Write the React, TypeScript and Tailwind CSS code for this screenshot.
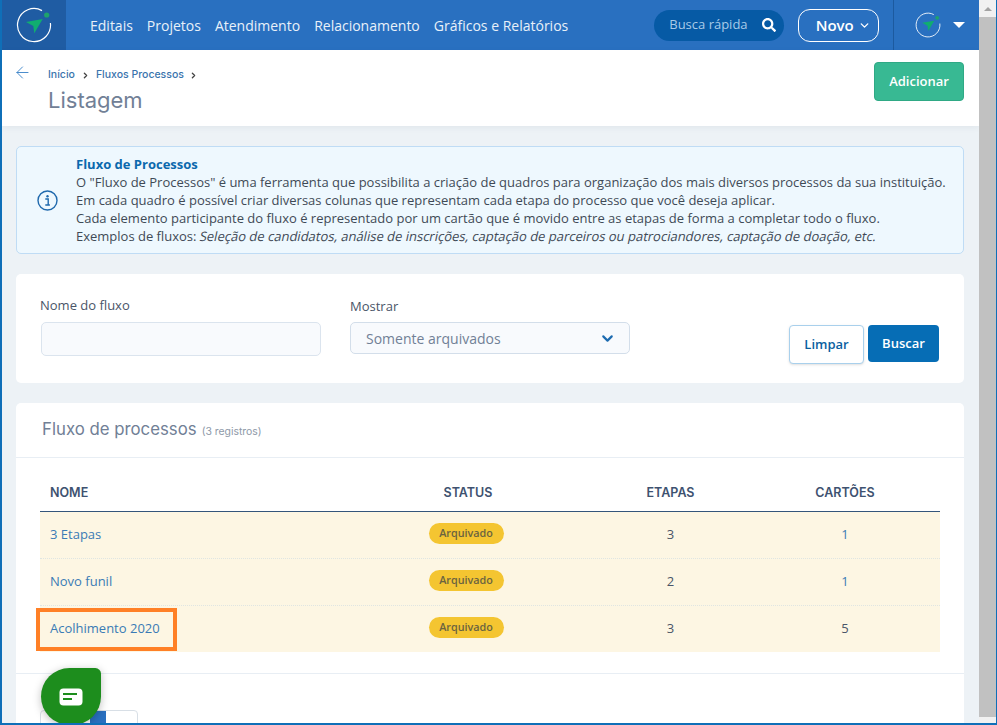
import { ArrowLeft, ChevronDown, ChevronRight } from "lucide-react";
import { FaSearch } from "react-icons/fa";

const sans = "font-['Open_Sans',sans-serif]";
const head = "font-['Inter',sans-serif]";

function Logo({ size }: { size: number }) {
  return (
    <svg width={size} height={size} viewBox="0 0 36 36" fill="none">
      <path d="M26 3.6A16.5 16.5 0 1 0 34.4 16" stroke="#fff" strokeWidth="1.2" />
      <circle cx="30.7" cy="8" r="2.6" fill="#1fa36c" />
      <path d="M10 15L26.7 12L18.3 26.3L17.3 19Z" fill="#10ad70" />
    </svg>
  );
}

const rows = [
  { name: "3 Etapas", etapas: 3, cartoes: 1 },
  { name: "Novo funil", etapas: 2, cartoes: 1 },
  { name: "Acolhimento 2020", etapas: 3, cartoes: 5 },
];

export default function App() {
  return (
    <div className={`${sans} relative flex h-[725px] w-[997px] overflow-hidden border-b-2 border-l-2 border-r border-[#0f6fb8] bg-[#edf2f6] text-[13px] text-[#4a5568]`}>
      <div className="flex min-w-0 flex-1 flex-col">
        <header className="flex h-[50px] shrink-0 items-center bg-[#2970c0] text-white">
          <div className="flex h-full w-[64px] items-center justify-center bg-[#1f5ca3]">
            <Logo size={36} />
          </div>
          <nav className="ml-6 flex gap-[14px] text-[14px] text-[#e8f0f9]">
            <span>Editais</span>
            <span>Projetos</span>
            <span>Atendimento</span>
            <span>Relacionamento</span>
            <span>Gráficos e Relatórios</span>
          </nav>
          <div className="ml-[86px] flex h-[31px] w-[130px] items-center justify-between rounded-full bg-[#065aa5] pl-[15px] pr-[8px] text-[13px] text-[#a9cbe8]">
            Busca rápida
            <FaSearch size={14} className="text-white" />
          </div>
          <div className="ml-[14px] flex h-[33px] w-[81px] items-center justify-center gap-[4px] rounded-[12px] border border-white pl-[9px] text-[15px] font-semibold">
            Novo
            <ChevronDown size={13} strokeWidth={2.5} />
          </div>
          <div className="ml-[14px] flex h-full flex-1 items-center border-l border-[#1c5a9f] pl-[21px]">
            <Logo size={26} />
            <span className="ml-[12px] h-0 w-0 border-x-[6px] border-t-[6px] border-x-transparent border-t-white" />
          </div>
        </header>

        <div className="flex h-[76px] shrink-0 justify-between bg-white pr-[15px] shadow-[0_2px_6px_rgba(30,60,90,0.06)]">
          <div className="flex">
            <ArrowLeft size={19} strokeWidth={1.1} className="ml-[11px] mt-[13px] text-[#2f7cc4]" />
            <div className="ml-[16px] pt-[18px]">
              <div className={`${head} flex items-center gap-[6px] text-[10.5px] font-medium leading-[14px] text-[#3a74ad]`}>
                Início
                <ChevronRight size={9} strokeWidth={3.5} className="text-[#444]" />
                Fluxos Processos
                <ChevronRight size={9} strokeWidth={3.5} className="-ml-px text-[#444]" />
              </div>
              <h1 className={`${head} mt-[5px] text-[22px] leading-[26px] text-[#718096]`}>Listagem</h1>
            </div>
          </div>
          <button className="mt-3 h-[39px] w-[90px] rounded-[4px] border border-[#2fa985] bg-[#38b993] text-[13px] font-semibold text-white">
            Adicionar
          </button>
        </div>

        <main className="flex flex-1 flex-col gap-[20px] pl-[14px] pr-[15px] pt-[20px]">
          <section className="flex h-[108px] shrink-0 items-center rounded-[5px] border border-[#bfdcf5] bg-[#eef8fe] pl-[20px] text-[13px] leading-[18px] text-[#3f4a56]">
            <svg width="21" height="21" viewBox="0 0 21 21" fill="none" className="shrink-0 text-[#1f69ad]">
              <circle cx="10.5" cy="10.5" r="9.5" stroke="currentColor" strokeWidth="1.4" />
              <circle cx="10.5" cy="6.2" r="1.2" fill="currentColor" />
              <path d="M8.3 9h2.9v5.6M8.3 15h4.6" stroke="currentColor" strokeWidth="1.4" />
            </svg>
            <div className="ml-[18px] whitespace-nowrap">
              <div className="font-bold text-[#0b69ad]">Fluxo de Processos</div>
              <div>O "Fluxo de Processos" é uma ferramenta que possibilita a criação de quadros para organização dos mais diversos processos da sua instituição.</div>
              <div>Em cada quadro é possível criar diversas colunas que representam cada etapa do processo que você deseja aplicar.</div>
              <div>Cada elemento participante do fluxo é representado por um cartão que é movido entre as etapas de forma a completar todo o fluxo.</div>
              <div>
                Exemplos de fluxos: <span className="inline-block -skew-x-12">Seleção de candidatos, análise de inscrições, captação de parceiros ou patrociandores, captação de doação, etc.</span>
              </div>
            </div>
          </section>

          <section className="flex h-[109px] shrink-0 items-start rounded-[5px] bg-white pl-[25px] pt-[24px]">
            <div className="w-[280px]">
              <label className="-ml-px -mt-px block text-[13px] leading-[16px] text-[#4a5568]">Nome do fluxo</label>
              <div className="mt-[9px] h-[34px] rounded-[5px] border border-[#dbe4ee] bg-[#f8fafd]" />
            </div>
            <div className="ml-[29px] w-[280px]">
              <label className="block text-[13px] leading-[16px] text-[#4a5568]">Mostrar</label>
              <div className="mt-[8px] flex h-[32px] items-center justify-between rounded-[5px] border border-[#d3deea] bg-[#f8fafd] pl-[15px] pr-[13px] text-[14px] text-[#718096]">
                Somente arquivados
                <ChevronDown size={17} strokeWidth={3} className="text-[#1d6bb0]" />
              </div>
            </div>
            <button className="ml-[159px] mt-[27px] h-[39px] w-[75px] rounded-[4px] border border-[#a9d0ec] bg-white text-[13px] font-semibold text-[#0b5f9f] shadow-sm">
              Limpar
            </button>
            <button className="ml-[4px] mt-[27px] h-[37px] w-[71px] rounded-[4px] bg-[#066db5] text-[13px] font-semibold text-white">
              Buscar
            </button>
          </section>

          <section className="flex-1 rounded-t-[5px] bg-white">
            <div className="flex h-[55px] items-center gap-[5px] border-b border-[#e8eef4] pl-[26px]">
              <h2 className={`${head} text-[16.8px] text-[#718096]`}>Fluxo de processos</h2>
              <span className={`${head} mt-[3px] text-[10.4px] text-[#8e99a8]`}>(3 registros)</span>
            </div>
            <div className="mx-[24px] mt-[18px]">
              <div className={`${head} grid h-[36px] grid-cols-[305px_246px_159px_1fr] items-start border-b border-[#34557a] text-[12.5px] font-semibold leading-[14px] text-[#3e5270]`}>
                <span className="pl-[10px] pt-[10px]">NOME</span>
                <span className="pt-[10px] text-center">STATUS</span>
                <span className="pt-[10px] text-center">ETAPAS</span>
                <span className="pt-[10px] text-center">CARTÕES</span>
              </div>
              {rows.map((r, i) => (
                <div key={r.name} className={`grid grid-cols-[305px_246px_159px_1fr] items-center bg-[#fdf6e3] ${i < 2 ? "h-[47px] border-b border-dotted border-[#dfe5e2]" : "h-[46px]"}`}>
                  <span className="pl-[10px] text-[#3a7bb5]">{r.name}</span>
                  <span className="flex justify-center">
                    <span className="-ml-[4px] -mt-[4px] flex h-[21px] w-[75px] items-center justify-center rounded-full bg-[#f4c531] text-[10.8px] font-semibold text-[#6b6340]">Arquivado</span>
                  </span>
                  <span className="text-center text-[#4a5568]">{r.etapas}</span>
                  <span className={`text-center ${r.cartoes === 1 ? "text-[#3a7bb5]" : "text-[#4a5568]"}`}>{r.cartoes}</span>
                </div>
              ))}
            </div>
            <div className="mt-[21px] border-t border-[#e8eef4]">
              <div className="ml-[24px] mt-[36px] flex h-[30px] w-[98px] overflow-hidden rounded-[4px] border border-[#d8dfe6]">
                <div className="w-[49px]" />
                <div className="w-[16px] bg-[#2970c0]" />
              </div>
            </div>
          </section>
        </main>
      </div>

      <aside className="relative w-[17px] shrink-0 bg-[#f1f1f1]">
        <div className="flex h-[17px] items-center justify-center">
          <span className="h-0 w-0 border-x-[4px] border-b-[4px] border-x-transparent border-b-[#a3a3a3]" />
        </div>
        <div className="h-[700px] bg-[#c1c1c1]" />
      </aside>

      <div className="pointer-events-none absolute left-[34px] top-[608px] h-[43px] w-[141px] border-[4px] border-[#ff8026]" />

      <div className="absolute left-[39px] top-[668px] flex h-[57px] w-[60px] items-center justify-center rounded-[30px] rounded-tr-[6px] bg-[#1d8d1d] shadow-[0_2px_8px_rgba(0,0,0,0.25)]">
        <svg width="24" height="18" viewBox="0 0 24 18">
          <rect x="0.5" y="0.5" width="23" height="17" rx="4" fill="#fff" />
          <rect x="4" y="5" width="14" height="2" fill="#1d8d1d" />
          <rect x="4" y="10" width="9" height="2" fill="#1d8d1d" />
        </svg>
      </div>
    </div>
  );
}
